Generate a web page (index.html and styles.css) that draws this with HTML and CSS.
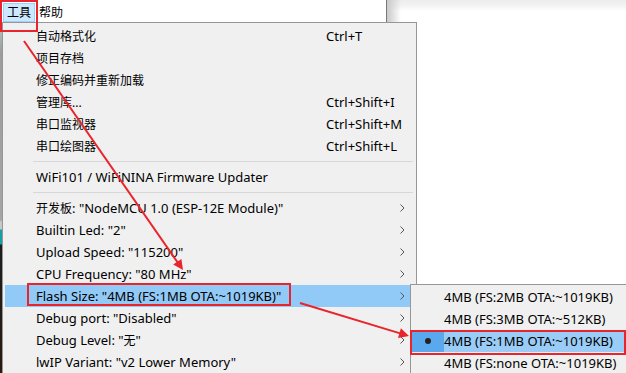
FILE: index.html
```html
<!DOCTYPE html>
<html lang="zh-CN">
<head>
    <meta charset="UTF-8">
    <meta name="viewport" content="width=device-width, initial-scale=1.0">
    <title>工具菜单</title>
    <link rel="stylesheet" href="styles.css">
</head>
<body>
<div class="screen">
    <div class="menubar">
        <div class="menubar-main">
            <span class="menubar-item is-open">工具</span>
            <span class="menubar-item">帮助</span>
        </div>
        <div class="menubar-rest"></div>
    </div>

    <div class="workspace">
        <div class="edge"></div>
        <div class="menu">
            <div class="item"><span class="mark"></span><span class="label zh">自动格式化</span><span class="key">Ctrl+T</span><span class="sub"></span></div>
            <div class="item"><span class="mark"></span><span class="label zh">项目存档</span><span class="key"></span><span class="sub"></span></div>
            <div class="item"><span class="mark"></span><span class="label zh">修正编码并重新加载</span><span class="key"></span><span class="sub"></span></div>
            <div class="item"><span class="mark"></span><span class="label zh">管理库...</span><span class="key">Ctrl+Shift+I</span><span class="sub"></span></div>
            <div class="item"><span class="mark"></span><span class="label zh">串口监视器</span><span class="key">Ctrl+Shift+M</span><span class="sub"></span></div>
            <div class="item"><span class="mark"></span><span class="label zh">串口绘图器</span><span class="key">Ctrl+Shift+L</span><span class="sub"></span></div>
            <div class="separator"></div>
            <div class="item"><span class="mark"></span><span class="label">WiFi101 / WiFiNINA Firmware Updater</span><span class="key"></span><span class="sub"></span></div>
            <div class="separator"></div>
            <div class="item"><span class="mark"></span><span class="label"><span class="zh">开发板</span>: "NodeMCU 1.0 (ESP-12E Module)"</span><span class="key"></span><span class="sub"><svg class="chevron" viewBox="0 0 5 8"><polyline points="0.5,0.5 4,4 0.5,7.5"/></svg></span></div>
            <div class="item"><span class="mark"></span><span class="label">Builtin Led: "2"</span><span class="key"></span><span class="sub"><svg class="chevron" viewBox="0 0 5 8"><polyline points="0.5,0.5 4,4 0.5,7.5"/></svg></span></div>
            <div class="item"><span class="mark"></span><span class="label">Upload Speed: "115200"</span><span class="key"></span><span class="sub"><svg class="chevron" viewBox="0 0 5 8"><polyline points="0.5,0.5 4,4 0.5,7.5"/></svg></span></div>
            <div class="item"><span class="mark"></span><span class="label">CPU Frequency: "80 MHz"</span><span class="key"></span><span class="sub"><svg class="chevron" viewBox="0 0 5 8"><polyline points="0.5,0.5 4,4 0.5,7.5"/></svg></span></div>
            <div class="item is-hot"><span class="mark"></span><span class="label">Flash Size: "4MB (FS:1MB OTA:~1019KB)"</span><span class="key"></span><span class="sub"><svg class="chevron" viewBox="0 0 5 8"><polyline points="0.5,0.5 4,4 0.5,7.5"/></svg></span></div>
            <div class="item"><span class="mark"></span><span class="label">Debug port: "Disabled"</span><span class="key"></span><span class="sub"><svg class="chevron" viewBox="0 0 5 8"><polyline points="0.5,0.5 4,4 0.5,7.5"/></svg></span></div>
            <div class="item"><span class="mark"></span><span class="label">Debug Level: "<span class="zh">无</span>"</span><span class="key"></span><span class="sub"><svg class="chevron" viewBox="0 0 5 8"><polyline points="0.5,0.5 4,4 0.5,7.5"/></svg></span></div>
            <div class="item"><span class="mark"></span><span class="label">lwIP Variant: "v2 Lower Memory"</span><span class="key"></span><span class="sub"><svg class="chevron" viewBox="0 0 5 8"><polyline points="0.5,0.5 4,4 0.5,7.5"/></svg></span></div>
        </div>
        <div class="blank"></div>
    </div>

    <!-- flash size submenu -->
    <div class="submenu">
        <div class="sub-item"><span class="radio"></span><span class="label">4MB (FS:2MB OTA:~1019KB)</span></div>
        <div class="sub-item"><span class="radio"></span><span class="label">4MB (FS:3MB OTA:~512KB)</span></div>
        <div class="sub-item is-checked"><span class="radio"><i class="dot"></i></span><span class="label">4MB (FS:1MB OTA:~1019KB)</span></div>
        <div class="sub-item"><span class="radio"></span><span class="label">4MB (FS:none OTA:~1019KB)</span></div>
    </div>

    <!-- red annotations -->
    <div class="callout callout-tools"></div>
    <div class="callout callout-flash"></div>
    <div class="callout callout-option"></div>
    <svg class="arrows" viewBox="0 0 626 373">
        <line x1="24" y1="41" x2="178" y2="263"/>
        <polygon points="183,270 173.2,264.6 181.4,258.9"/>
        <line x1="300" y1="303" x2="401" y2="333.6"/>
        <polygon points="409,336 398,337.9 400.9,328.3"/>
    </svg>
</div>
</body>
</html>
```

FILE: styles.css
```css
body {
    margin: 0;
    padding: 0;
    background: white;
    overflow: hidden;
    font-family: "Noto Sans", "Noto Sans CJK SC", sans-serif;
    font-size: 13px;
    color: black;
}
.screen {
    position: relative;
    width: 626px;
    height: 373px;
    overflow: hidden;
    display: flex;
    flex-direction: column;
}
.zh {
    font-size: 12px;
}

/* menu bar */
.menubar {
    display: flex;
    height: 22px;
}
.menubar-main {
    width: 387px;
    background: white;
    border-right: 1px solid #7a7a7a;
    display: flex;
    align-items: flex-start;
    padding-left: 3px;
    padding-top: 3px;
    box-sizing: border-box;
}
.menubar-item {
    height: 17px;
    line-height: 17px;
    font-size: 12px;
    padding: 0 3px;
    border: 1px solid transparent;
}
.menubar-item.is-open {
    background: #cce8ff;
    border-color: #99d1ff;
}
.menubar-rest {
    flex: 1;
    background:
        linear-gradient(to right, #c9c9c9, rgba(255, 255, 255, 0) 14px),
        linear-gradient(to bottom, #ececec 0, #f3f3f3 6px, white 11px);
}

/* area under the menu bar */
.workspace {
    flex: 1;
    display: flex;
}
.edge {
    width: 2px;
    background: linear-gradient(to bottom, #b9c6c6 0, #9c9c9c 30px, #a5a5a5 198px, #c8c8c8 200px, #c8c8c8 207px, #17a0a4 208px, #17a0a4 222px, #1d1d1d 223px, #2a1a10 351px);
}
.menu {
    width: 415px;
    box-sizing: border-box;
    background: #f0f0f0;
    border: 1px solid #979797;
    border-bottom: none;
    padding: 2px 2px 0 2px;
}
.blank {
    flex: 1;
    background: white;
}
.item {
    display: grid;
    grid-template-columns: 31px 1fr 72px 16px;
    align-items: center;
    height: 22px;
    white-space: nowrap;
}
.item.is-hot {
    background: #91c9f7;
}
.sub {
    display: flex;
    align-items: center;
    padding-left: 2px;
}
.chevron {
    width: 5px;
    height: 8px;
    fill: none;
    stroke: #555;
    stroke-width: 1;
}
.separator {
    height: 0;
    margin: 4px 1px 4px 28px;
    border-top: 1px solid #d7d7d7;
}

/* submenu */
.submenu {
    position: absolute;
    left: 410px;
    top: 284px;
    width: 240px;
    background: #f0f0f0;
    border: 1px solid #979797;
    padding: 1px 0;
}
.sub-item {
    display: grid;
    grid-template-columns: 33px 1fr;
    align-items: center;
    height: 22px;
    white-space: nowrap;
}
.sub-item .radio {
    height: 100%;
    display: flex;
    align-items: center;
    justify-content: center;
}
.sub-item.is-checked {
    background: #99cdf8;
}
.sub-item.is-checked .radio {
    background: #5aa9ef;
}
.dot {
    width: 6px;
    height: 6px;
    border-radius: 50%;
    background: #222;
}

/* red annotations */
.callout {
    position: absolute;
    border: 2px solid #e8242c;
    box-sizing: border-box;
}
.callout-tools {
    left: 0;
    top: 0;
    width: 38px;
    height: 32px;
}
.callout-flash {
    left: 27px;
    top: 283px;
    width: 264px;
    height: 23px;
}
.callout-option {
    left: 410px;
    top: 330px;
    width: 216px;
    height: 25px;
}
.arrows {
    position: absolute;
    left: 0;
    top: 0;
    width: 626px;
    height: 373px;
    pointer-events: none;
}
.arrows line {
    stroke: #e8242c;
    stroke-width: 2;
}
.arrows polygon {
    fill: #e8242c;
}
```
